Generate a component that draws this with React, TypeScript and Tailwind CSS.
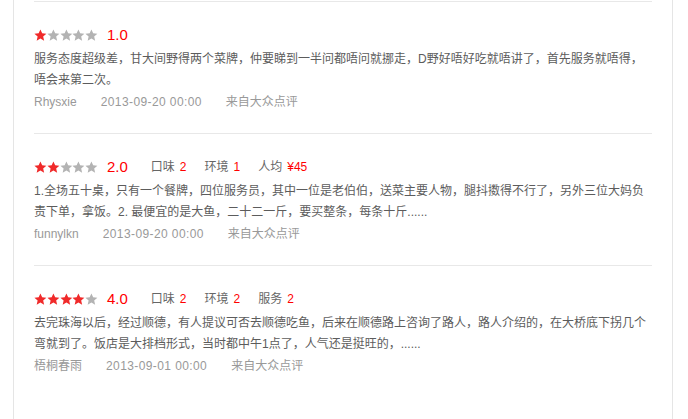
import React from 'react';

type Review = {
  id: number;
  rating: number;
  scores: { label: string; value: string }[];
  content: string;
  user: string;
  date: string;
  source: string;
};

const reviews: Review[] = [
  {
    id: 1,
    rating: 1,
    scores: [],
    content:
      '服务态度超级差，甘大间野得两个菜牌，仲要睇到一半问都唔问就挪走，D野好唔好吃就唔讲了，首先服务就唔得，唔会来第二次。',
    user: 'Rhysxie',
    date: '2013-09-20 00:00',
    source: '来自大众点评',
  },
  {
    id: 2,
    rating: 2,
    scores: [
      { label: '口味', value: '2' },
      { label: '环境', value: '1' },
      { label: '人均', value: '¥45' },
    ],
    content:
      '1.全场五十桌，只有一个餐牌，四位服务员，其中一位是老伯伯，送菜主要人物，腿抖擞得不行了，另外三位大妈负责下单，拿饭。2. 最便宜的是大鱼，二十二一斤，要买整条，每条十斤......',
    user: 'funnylkn',
    date: '2013-09-20 00:00',
    source: '来自大众点评',
  },
  {
    id: 3,
    rating: 4,
    scores: [
      { label: '口味', value: '2' },
      { label: '环境', value: '2' },
      { label: '服务', value: '2' },
    ],
    content:
      '去完珠海以后，经过顺德，有人提议可否去顺德吃鱼，后来在顺德路上咨询了路人，路人介绍的，在大桥底下拐几个弯就到了。饭店是大排档形式，当时都中午1点了，人气还是挺旺的，......',
    user: '梧桐春雨',
    date: '2013-09-01 00:00',
    source: '来自大众点评',
  },
];

function Star({ on }: { on: boolean }) {
  return (
    <svg viewBox="0 0 24 24" className="w-[12.8px] h-[12.8px] shrink-0">
      <path
        d="M12 0.8l3.3 7.3 7.9.7-6 5.3 1.8 7.8L12 17.8l-7 4.1 1.8-7.8-6-5.3 7.9-.7z"
        fill={on ? '#f02a2a' : '#b3b3b3'}
      />
    </svg>
  );
}

function ReviewItem({ review }: { review: Review }) {
  return (
    <div className="border-t border-[#e8e8e8] pt-[23px] pb-5">
      {/* Rating row */}
      <div className="flex items-center h-5">
        <div className="flex items-center">
          {[1, 2, 3, 4, 5].map((n) => (
            <Star key={n} on={n <= review.rating} />
          ))}
        </div>
        <span className="ml-[9px] text-[15px] text-[#f00] leading-5">
          {review.rating.toFixed(1)}
        </span>
        <div className="flex items-center ml-[23px] gap-[18px] text-[12px] leading-5">
          {review.scores.map((s) => (
            <span key={s.label} className="text-[#666]">
              {s.label}
              <span className="ml-[5px] text-[#f00]">{s.value}</span>
            </span>
          ))}
        </div>
      </div>

      {/* Content */}
      <p className="mt-1 text-[12px] leading-[21px] text-[#5c5c5c]">{review.content}</p>

      {/* Meta */}
      <div className="flex gap-6 text-[12px] leading-[22px] text-[#999]">
        <span>{review.user}</span>
        <span className="tracking-[0.4px]">{review.date}</span>
        <span>{review.source}</span>
      </div>
    </div>
  );
}

export default function App() {
  return (
    <div
      className="w-[688px] h-[419px] bg-white overflow-hidden"
      style={{ fontFamily: '"Liberation Sans", "Noto Sans CJK SC", sans-serif' }}
    >
      <div className="ml-[13px] w-[660px] border-x border-b border-[#e5e5e5] pt-px px-5 pb-[23px]">
        {reviews.map((r) => (
          <ReviewItem key={r.id} review={r} />
        ))}
      </div>
    </div>
  );
}
